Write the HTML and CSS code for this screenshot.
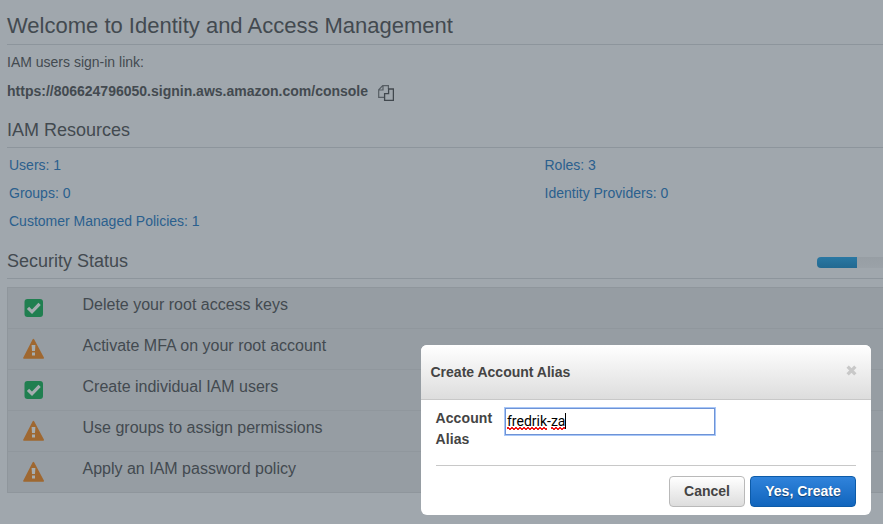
FILE: index.html
```html
<!DOCTYPE html>
<html lang="en">
<head>
<meta charset="utf-8">
<title>IAM Dashboard</title>
<link rel="stylesheet" href="styles.css">
</head>
<body>
<svg class="symbols" aria-hidden="true">
  <symbol id="ok" viewBox="0 0 22 22">
    <rect x="1.5" y="2" width="18.5" height="18" rx="3" fill="#207f50"/>
    <path d="M5 10.8l4 4 7.6-8" fill="none" stroke="#a5adb0" stroke-width="3.2"/>
  </symbol>
  <symbol id="warn" viewBox="0 0 22 22">
    <path d="M10.4 1.7L20.2 20H.9z" fill="#9f6831" stroke="#9f6831" stroke-width="1.6" stroke-linejoin="round"/>
    <path d="M8.6 7h3.8l-.4 6H9zM9 14.6h3v3H9z" fill="#a5adb0"/>
  </symbol>
</svg>
<main class="page">
  <h1 class="title">Welcome to Identity and Access Management</h1>
  <p class="label">IAM users sign-in link:</p>
  <div class="signin">
    <strong>https://806624796050.signin.aws.amazon.com/console</strong>
    <svg class="copy" viewBox="0 0 16 16" fill="none" stroke-width="1.2">
      <path d="M6.5 12.4H.7V4.8L4.7.7h5.7v3.4M5 1v4H1" stroke="#575e64"/>
      <path d="M6.6 15.3V8.7h4V4h4.8v11.3z" stroke="#41484e" stroke-width="1.3"/>
    </svg>
  </div>
  <h2 class="heading">IAM Resources</h2>
  <div class="resources">
    <a>Users: 1</a><a>Roles: 3</a>
    <a>Groups: 0</a><a>Identity Providers: 0</a>
    <a>Customer Managed Policies: 1</a>
  </div>
  <div class="heading security">
    <h2>Security Status</h2>
    <div class="progress"><div class="bar"></div></div>
  </div>
  <ul class="checks">
    <li><svg><use href="#ok"/></svg><span>Delete your root access keys</span></li>
    <li><svg><use href="#warn"/></svg><span>Activate MFA on your root account</span></li>
    <li><svg><use href="#ok"/></svg><span>Create individual IAM users</span></li>
    <li><svg><use href="#warn"/></svg><span>Use groups to assign permissions</span></li>
    <li><svg><use href="#warn"/></svg><span>Apply an IAM password policy</span></li>
  </ul>
</main>
<section class="dialog" role="dialog">
  <header class="dialog-head">
    <h3>Create Account Alias</h3>
    <svg class="close" viewBox="0 0 10 10"><path d="M1.5 1.5l7 7M8.5 1.5l-7 7" stroke="#c8c8c8" stroke-width="3"/></svg>
  </header>
  <div class="dialog-body">
    <div class="field">
      <label>Account Alias</label>
      <div class="input"><span class="typo">fredrik</span><span>-</span><span class="typo">za</span><i class="caret"></i></div>
    </div>
    <footer class="actions">
      <button class="btn">Cancel</button>
      <button class="btn primary">Yes, Create</button>
    </footer>
  </div>
</section>
</body>
</html>
```
FILE: styles.css
```css
* { box-sizing: border-box; }
body {
  margin: 0;
  height: 524px;
  overflow: hidden;
  background: #a0a7ad;
  color: #434a50;
  font: 14px/20px "Liberation Sans", Arial, sans-serif;
}
h1, h2, h3, p, ul { margin: 0; padding: 0; font-weight: normal; }
.symbols { display: none; }
.page { padding-left: 7px; }
.title {
  height: 45px;
  padding-top: 11px;
  border-bottom: 1px solid #8d959c;
  font-size: 22px;
  line-height: 30px;
}
.label { margin-top: 7px; }
.signin { display: flex; height: 20px; margin-top: 9px; }
.copy { width: 16px; height: 16px; margin: 4px 0 0 10px; }
.heading {
  height: 31px;
  margin-top: 16px;
  border-bottom: 1px solid #8d959c;
  font-size: 18px;
  line-height: 26px;
}
.resources {
  display: grid;
  grid-template-columns: 535.5px 1fr;
  grid-auto-rows: 28px;
  padding: 3px 0 0 2px;
  line-height: 28px;
  color: #2b608e;
}
.security { display: flex; justify-content: space-between; margin-top: 13px; }
.security h2 { font-size: 18px; }
.progress {
  width: 66px;
  height: 11px;
  margin-top: 9px;
  border-radius: 4px 0 0 4px;
  overflow: hidden;
  background: linear-gradient(#979ea4, #9ba2a8);
}
.bar { width: 40px; height: 11px; background: linear-gradient(#2a78a3, #226991); }
.checks {
  margin-top: 8px;
  border: solid #8f969c;
  border-width: 1px 0 1px 1px;
  background: #969da3;
  list-style: none;
  font-size: 16px;
}
.checks li { display: flex; height: 41px; border-bottom: 1px solid #90979d; }
.checks li:last-child { height: 40px; border: 0; }
.checks svg { width: 22px; height: 22px; margin: 9px 37.5px 0 15px; }
.checks span { padding-top: 7px; }

.dialog {
  position: absolute;
  left: 421px;
  top: 345px;
  width: 450px;
  height: 170px;
  border-radius: 6px;
  background: #fff;
  color: #444;
  font-weight: bold;
  overflow: hidden;
}
.dialog-head {
  display: flex;
  justify-content: space-between;
  height: 55px;
  padding: 17px 14px 0 9.5px;
  border-bottom: 1px solid #c8c8c8;
  background: linear-gradient(#fff, #ddd);
}
.dialog-head h3 { font-size: 14px; font-weight: bold; }
.close { width: 11px; height: 11px; margin-top: 3px; }
.dialog-body { padding: 7px 15px 0; }
.field { display: flex; height: 59px; border-bottom: 1px solid #c8c8c8; }
.field label {
  width: 68px;
  margin: 1px 0 0 -.5px;
  padding-right: 8px;
  line-height: 21px;
  letter-spacing: .1px;
}
.input {
  display: flex;
  width: 212px;
  height: 29px;
  margin-left: .5px;
  padding: 5px 2px;
  border: 1px solid #a8c7f8;
  box-shadow: inset 0 0 0 1px #6e93d6;
  color: #000;
  font: 14px/16px Roboto, sans-serif;
}
/* Spell-check squiggle: two crossing strokes per 4px tile. */
.typo {
  height: 17px;
  background:
    linear-gradient(45deg, transparent 38%, #f01818 38% 62%, transparent 62%) 0 100% / 4px 3px repeat-x,
    linear-gradient(-45deg, transparent 38%, #f01818 38% 62%, transparent 62%) 2px 100% / 4px 3px repeat-x;
}
.caret { width: 1px; height: 16px; background: #000; }
.actions { display: flex; justify-content: flex-end; gap: 5px; padding-top: 10px; }
.btn {
  width: 76px;
  height: 31px;
  padding: 0 0 2px;
  border: 1px solid #b9b9b9;
  border-radius: 4px;
  background: linear-gradient(#fff, #ddd);
  color: #444;
  font: bold 14px "Liberation Sans", Arial, sans-serif;
}
.primary {
  width: 106px;
  border-color: #0d5ba8;
  background: linear-gradient(#3083db, #1165bd);
  color: #fff;
  text-shadow: 0 1px 1px #123d6d;
}
```
